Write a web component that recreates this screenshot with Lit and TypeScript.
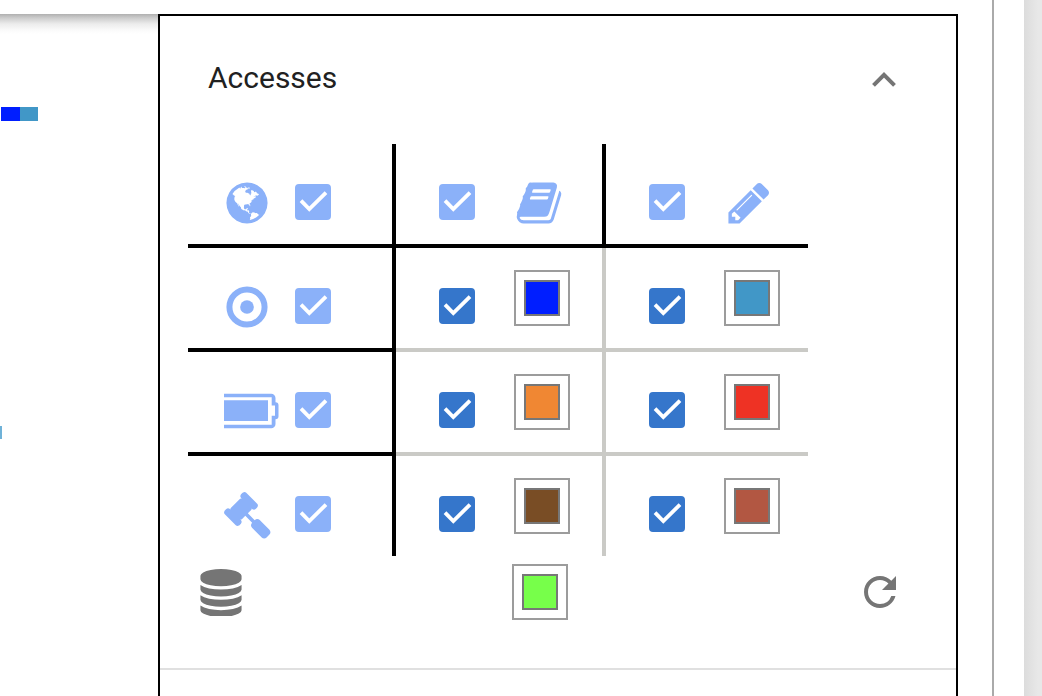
import { LitElement, html, svg, css } from "lit";
import { customElement, property, state } from "lit/decorators.js";

const GLYPHS: Record<string, unknown> = {
  globe: svg`<path d="M896 128q209 0 385.5 103t279.5 279.5 103 385.5-103 385.5-279.5 279.5-385.5 103-385.5-103-279.5-279.5-103-385.5 103-385.5 279.5-279.5 385.5-103zm274 521q-2 1-9.5 9.5t-13.5 9.5q2 0 4.5-5t5-11 3.5-7q6-7 22-15 14-6 52-12 34-8 51 11-2-2 9.5-13t14.5-12q3-2 15-4.5t15-7.5l2-22q-12 1-17.5-7t-6.5-21q0 2-6 8 0-7-4.5-8t-11.5 1-9 1q-10-3-15-7.5t-8-16.5-4-15q-2-5-9.5-11t-9.5-10q-1-2-2.5-5.5t-3-6.5-4-5.5-5.5-2.5-7 5-7.5 10-4.5 5q-3-2-6-1.5t-4.5 1-4.5 3-5 3.5q-3 2-8.5 3t-8.5 2q15-5-1-11-10-4-16-3 9-4 7.5-12t-8.5-14h5q-1-4-8.5-8.5t-17.5-8.5-13-6q-8-5-34-9.5t-33-.5q-5 6-4.5 10.5t4 14 3.5 12.5q1 6-5.5 13t-6.5 12q0 7 14 15.5t10 21.5q-3 8-16 16t-16 12q-5 8-1.5 18.5t10.5 16.5q2 2 1.5 4t-3.5 4.5-5.5 4-6.5 3.5l-3 2q-11 5-20.5-6t-13.5-26q-7-25-16-30-23-8-29 1-5-13-41-26-25-9-58-4 6-1 0-15-7-15-19-12 3-6 4-17.5t1-13.5q3-13 12-23 1-1 7-8.5t9.5-13.5.5-6q35 4 50-11 5-5 11.5-17t10.5-17q9-6 14-5.5t14.5 5.5 14.5 5q14 1 15.5-11t-7.5-20q12 1 3-17-4-7-8-9-12-4-27 5-8 4 2 8-1-1-9.5 10.5t-16.5 17.5-16-5q-1-1-5.5-13.5t-9.5-13.5q-8 0-16 15 3-8-11-15t-24-8q19-12-8-27-7-4-20.5-5t-19.5 4q-5 7-5.5 11.5t5 8 10.5 5.5 11.5 4 8.5 3q14 10 8 14-2 1-8.5 3.5t-11.5 4.5-6 4q-3 4 0 14t-2 14q-5-5-9-17.5t-7-16.5q7 9-25 6l-10-1q-4 0-16 2t-20.5 1-13.5-8q-4-8 0-20 1-4 4-2-4-3-11-9.5t-10-8.5q-46 15-94 41 6 1 12-1 5-2 13-6.5t10-5.5q34-14 42-7l5-5q14 16 20 25-7-4-30-1-20 6-22 12 7 12 5 18-4-3-11.5-10t-14.5-11-15-5q-16 0-22 1-146 80-235 222 7 7 12 8 4 1 5 9t2.5 11 11.5-3q9 8 3 19 1-1 44 27 19 17 21 21 3 11-10 18-1-2-9-9t-9-4q-3 5 .5 18.5t10.5 12.5q-7 0-9.5 16t-2.5 35.5-1 23.5l2 1q-3 12 5.5 34.5t21.5 19.5q-13 3 20 43 6 8 8 9 3 2 12 7.5t15 10 10 10.5q4 5 10 22.5t14 23.5q-2 6 9.5 20t10.5 23q-1 0-2.5 1t-2.5 1q3 7 15.5 14t15.5 13q1 3 2 10t3 11 8 2q2-20-24-62-15-25-17-29-3-5-5.5-15.5t-4.5-14.5q2 0 6 1.5t8.5 3.5 7.5 4 2 3q-3 7 2 17.5t12 18.5 17 19 12 13q6 6 14 19.5t0 13.5q9 0 20 10t17 20q5 8 8 26t5 24q2 7 8.5 13.5t12.5 9.5l16 8 13 7q5 2 18.5 10.5t21.5 11.5q10 4 16 4t14.5-2.5 13.5-3.5q15-2 29 15t21 21q36 19 55 11-2 1 .5 7.5t8 15.5 9 14.5 5.5 8.5q5 6 18 15t18 15q6-4 7-9-3 8 7 20t18 10q14-3 14-32-31 15-49-18 0-1-2.5-5.5t-4-8.5-2.5-8.5 0-7.5 5-3q9 0 10-3.5t-2-12.5-4-13q-1-8-11-20t-12-15q-5 9-16 8t-16-9q0 1-1.5 5.5t-1.5 6.5q-13 0-15-1 1-3 2.5-17.5t3.5-22.5q1-4 5.5-12t7.5-14.5 4-12.5-4.5-9.5-17.5-2.5q-19 1-26 20-1 3-3 10.5t-5 11.5-9 7q-7 3-24 2t-24-5q-13-8-22.5-29t-9.5-37q0-10 2.5-26.5t3-25-5.5-24.5q3-2 9-9.5t10-10.5q2-1 4.5-1.5t4.5 0 4-1.5 3-6q-1-1-4-3-3-3-4-3 7 3 28.5-1.5t27.5 1.5q15 11 22-2 0-1-2.5-9.5t-.5-13.5q5 27 29 9 3 3 15.5 5t17.5 5q3 2 7 5.5t5.5 4.5 5-.5 8.5-6.5q10 14 12 24 11 40 19 44 7 3 11 2t4.5-9.5 0-14-1.5-12.5l-1-8v-18l-1-8q-15-3-18.5-12t1.5-18.5 15-18.5q1-1 8-3.5t15.5-6.5 12.5-8q21-19 15-35 7 0 11-9-1 0-5-3t-7.5-5-4.5-2q9-5 2-16 5-3 7.5-11t7.5-10q9 12 21 2 7-8 1-16 5-7 20.5-10.5t18.5-9.5q7 2 8-2t1-12 3-12q4-5 15-9t13-5l17-11q3-4 0-4 18 2 31-11 10-11-6-20 3-6-3-9.5t-15-5.5q3-1 11.5-.5t10.5-1.5q15-10-7-16-17-5-43 12zm-163 877q206-36 351-189-3-3-12.5-4.5t-12.5-3.5q-18-7-24-8 1-7-2.5-13t-8-9-12.5-8-11-7q-2-2-7-6t-7-5.5-7.5-4.5-8.5-2-10 1l-3 1q-3 1-5.5 2.5t-5.5 3-4 3 0 2.5q-21-17-36-22-5-1-11-5.5t-10.5-7-10-1.5-11.5 7q-5 5-6 15t-2 13q-7-5 0-17.5t2-18.5q-3-6-10.5-4.5t-12 4.5-11.5 8.5-9 6.5-8.5 5.5-8.5 7.5q-3 4-6 12t-5 11q-2-4-11.5-6.5t-9.5-5.5q2 10 4 35t5 38q7 31-12 48-27 25-29 40-4 22 12 26 0 7-8 20.5t-7 21.5q0 6 2 16z"/>`,
  book: svg`<path d="M1703 478q40 57 18 129l-275 906q-19 64-76.5 107.5t-122.5 43.5h-923q-77 0-148.5-53.5t-99.5-131.5q-24-67-2-127 0-4 3-27t4-37q1-8-3-21.5t-3-19.5q2-11 8-21t16.5-23.5 16.5-23.5q23-38 45-91.5t30-91.5q3-10 .5-30t-.5-28q3-11 17-28t17-23q21-36 42-92t25-90q1-9-2.5-32t.5-28q4-13 22-30.5t22-22.5q19-26 42.5-84.5t27.5-96.5q1-8-3-25.5t-2-26.5q2-8 9-18t18-23 17-21q8-12 16.5-30.5t15-35 16-36 19.5-32 26.5-23.5 36-11.5 47.5 5.5l-1 3q38-9 51-9h761q74 0 114 56t18 130l-274 906q-36 119-71.5 153.5t-128.5 34.5h-869q-27 0-38 15-11 16-1 43 24 70 144 70h923q29 0 56-15.5t35-41.5l300-987q7-22 5-57 38 15 59 43zm-1064 2q-4 13 2 22.5t20 9.5h608q13 0 25.5-9.5t16.5-22.5l21-64q4-13-2-22.5t-20-9.5h-608q-13 0-25.5 9.5t-16.5 22.5zm-83 256q-4 13 2 22.5t20 9.5h608q13 0 25.5-9.5t16.5-22.5l21-64q4-13-2-22.5t-20-9.5h-608q-13 0-25.5 9.5t-16.5 22.5z"/>`,
  pencil: svg`<path d="M491 1536l91-91-235-235-91 91v107h128v128h107zm523-928q0-22-22-22-10 0-17 7l-542 542q-7 7-7 17 0 22 22 22 10 0 17-7l542-542q7-7 7-17zm-54-192l416 416-832 832h-416v-416zm683 96q0 53-37 90l-166 166-416-416 166-165q36-38 90-38 53 0 91 38l235 234q37 39 37 91z"/>`,
  target: svg`<circle cx="896" cy="896" r="656" fill="none" stroke="currentColor" stroke-width="224"/><circle cx="896" cy="896" r="256"/>`,
  gavel: svg`<path d="M1771 1536q0 53-37 90l-107 108q-39 37-91 37-53 0-90-37l-363-364q-38-36-38-90 0-53 43-96l-256-256-126 126q-14 14-34 14t-34-14q2 2 12.5 12t12.5 13 10 11.5 10 13.5 6 13.5 5.5 16.5 1.5 18q0 38-28 68-3 3-16.5 18t-19 20.5-18.5 16.5-22 15.5-22 9-26 4.5q-40 0-68-28l-408-408q-28-28-28-68 0-13 4.5-26t9-22 15.5-22 16.5-18.5 20.5-19 18-16.5q30-28 68-28 10 0 18 1.5t16.5 5.5 13.5 6 13.5 10 11.5 10 13 12.5 12 12.5q-14-14-14-34t14-34l348-348q14-14 34-14t34 14q-2-2-12.5-12t-12.5-13-10-11.5-10-13.5-6-13.5-5.5-16.5-1.5-18q0-38 28-68 3-3 16.5-18t19-20.5 18.5-16.5 22-15.5 22-9 26-4.5q40 0 68 28l408 408q28 28 28 68 0 13-4.5 26t-9 22-15.5 22-16.5 18.5-20.5 19-18 16.5q-30 28-68 28-10 0-18-1.5t-16.5-5.5-13.5-6-13.5-10-11.5-10-13-12.5-12-12.5q14 14 14 34t-14 34l-126 126 256 256q43-43 96-43 52 0 91 37l363 363q37 39 37 91z"/>`,
};

interface AccessRow {
  id: string;
  label: string;
  read: string;
  write: string;
}

const ROWS: AccessRow[] = [
  { id: "target", label: "Targeted", read: "#001eff", write: "#4197c7" },
  { id: "battery", label: "Battery", read: "#f08733", write: "#ee3224" },
  { id: "gavel", label: "Rules", read: "#794d25", write: "#b25742" },
];

@customElement("access-check")
export class AccessCheck extends LitElement {
  @property() label = "";
  @property({ type: Boolean, reflect: true }) strong = false;

  static styles = css`
    :host { display: block; flex: none; color: #8bb1f9; }
    :host([strong]) { color: #3576cb; }
    .box { display: grid; width: 36px; height: 36px; cursor: pointer; }
    .input, .mark { grid-area: 1 / 1; width: 36px; height: 36px; margin: 0; }
    .input {
      appearance: none;
      box-sizing: border-box;
      border: 4px solid currentColor;
      border-radius: 4px;
      color: inherit;
      cursor: pointer;
    }
    .input:checked { background: currentColor; }
    .mark { pointer-events: none; visibility: hidden; }
    .input:checked + .mark { visibility: visible; }
  `;

  render() {
    return html`<label class="box">
      <input class="input" type="checkbox" checked aria-label=${this.label} />
      <svg class="mark" viewBox="0 0 36 36" aria-hidden="true">
        <path d="M6 16.6L14.3 25L31 8.6" fill="none" stroke="#fff" stroke-width="3.8" />
      </svg>
    </label>`;
  }
}

@customElement("color-well")
export class ColorWell extends LitElement {
  @property() value = "#000000";
  @property() label = "";

  static styles = css`
    :host { display: block; flex: none; }
    .well { display: block; }
    .input {
      appearance: none;
      display: block;
      box-sizing: border-box;
      width: 56px;
      height: 56px;
      margin: 0;
      padding: 8px;
      border: 2px solid #9c9c9c;
      border-radius: 0;
      background: #fff;
      cursor: pointer;
    }
    .input::-webkit-color-swatch-wrapper { padding: 0; }
    .input::-webkit-color-swatch { border: 2px solid #777; border-radius: 0; }
  `;

  render() {
    return html`<label class="well">
      <input class="input" type="color" .value=${this.value} aria-label=${this.label} />
    </label>`;
  }
}

@customElement("app-root")
export class AppRoot extends LitElement {
  @state() private open = true;

  static styles = css`
    :host {
      display: flex;
      min-height: 100vh;
      background: #fff;
      color: #212121;
      font-family: Roboto, "Liberation Sans", sans-serif;
    }
    .main {
      display: flex;
      flex-direction: column;
      flex: 1;
      min-width: 0;
      border-right: 2px solid #aaa;
    }
    .topbar { height: 14px; background: #fff; }
    .content { display: flex; flex: 1; padding-right: 34px; }
    .chart {
      flex: 1;
      min-width: 0;
      background: linear-gradient(#b0b0b0, #cdcdcd 4px, #ececec 10px, #fafafa 16px, #fff 20px) top / 100% 20px no-repeat;
    }
    .bars { display: block; }
    .panel {
      flex: 0 1 800px;
      box-sizing: border-box;
      border: 2px solid #000;
      border-bottom: 0;
      background: #fff;
    }
    .gutter { width: 30px; }
    .rail { width: 18px; background: linear-gradient(90deg, #dcdcdc, #e8e8e8 14px); }
    .heading { margin: 0; }
    .toggle {
      display: flex;
      align-items: center;
      justify-content: space-between;
      box-sizing: border-box;
      width: 100%;
      height: 124px;
      padding: 0 60px 0 48px;
      border: 0;
      background: none;
      color: inherit;
      font: 400 30px/36px Roboto, "Liberation Sans", sans-serif;
      cursor: pointer;
    }
    .chevron { color: #757575; }
    .section { padding-bottom: 48px; border-bottom: 2px solid #e0e0e0; }
    .matrix {
      table-layout: fixed;
      width: 620px;
      margin: 4px 0 0 28px;
      border-collapse: collapse;
    }
    .col-scope { width: 206px; }
    .col-read { width: 210px; }
    .cell { padding: 0; font-weight: 400; text-align: left; }
    .scope, .head { border-right: 4px solid #000; }
    .line .head, .line .scope { border-bottom: 4px solid #000; }
    .value { border: 4px solid #cacac6; }
    .last { border-right: 0; }
    .body:last-child .cell { border-bottom: 0; }
    .inner {
      display: flex;
      gap: 39px;
      box-sizing: border-box;
      height: 100px;
      padding: 40px 0 0 43px;
    }
    .scope .inner { gap: 16px; padding-left: 35px; }
    .raised { height: 56px; margin-top: -18px; }
    .glyph {
      display: flex;
      justify-content: center;
      width: 50px;
      height: 48px;
      margin-top: -5px;
      color: #8bb1f9;
      fill: currentColor;
    }
    .scope .glyph { justify-content: flex-start; width: 56px; }
    .footer {
      display: grid;
      grid-template-columns: 1fr auto 1fr;
      align-items: center;
      margin-top: 8px;
      padding: 0 52px 0 16px;
    }
    .action {
      display: block;
      width: 48px;
      height: 48px;
      padding: 0;
      border: 0;
      background: none;
      color: #757575;
      fill: currentColor;
      cursor: pointer;
    }
    .action svg { display: block; }
    .database { margin-left: 21px; }
    .refresh { justify-self: end; }
  `;

  private glyph(name: string) {
    if (name === "battery") {
      return html`<span class="glyph"><svg width="56" height="48" viewBox="-1 5 56 48" aria-hidden="true">
        <path d="M0 18.3H44V39H0z" />
        <path fill-rule="evenodd" d="M0 11.7H47.2a4.3 4.3 0 0 1 4.3 4.3V20.3a3 3 0 0 1 3 3V34.3a3 3 0 0 1-3 3V42a4.3 4.3 0 0 1-4.3 4.3H0V42.7H47.7V33.8H51V23.6H47.7V15.2H0z" />
      </svg></span>`;
    }
    return html`<span class="glyph"><svg width="48" height="48" viewBox="0 0 1792 1792" aria-hidden="true">${GLYPHS[name]}</svg></span>`;
  }

  private valueCell(row: AccessRow, kind: "read" | "write") {
    return html`<td class="cell value ${kind === "write" ? "last" : ""}">
      <div class="inner">
        <access-check strong label="${row.label} ${kind}"></access-check>
        <color-well class="raised" label="${row.label} ${kind} color" value=${row[kind]}></color-well>
      </div>
    </td>`;
  }

  private renderMatrix() {
    return html`<table class="matrix">
      <colgroup><col class="col-scope" /><col class="col-read" /><col /></colgroup>
      <tbody>
        <tr class="line">
          <th class="cell scope" scope="col"><div class="inner">${this.glyph("globe")}<access-check label="All accesses"></access-check></div></th>
          <th class="cell head" scope="col"><div class="inner"><access-check label="All reads"></access-check>${this.glyph("book")}</div></th>
          <th class="cell head last" scope="col"><div class="inner"><access-check label="All writes"></access-check>${this.glyph("pencil")}</div></th>
        </tr>
        ${ROWS.map((row) => html`<tr class="line body">
          <th class="cell scope" scope="row"><div class="inner">${this.glyph(row.id)}<access-check label=${row.label}></access-check></div></th>
          ${this.valueCell(row, "read")}${this.valueCell(row, "write")}
        </tr>`)}
      </tbody>
    </table>
    <div class="footer">
      <button class="action database" aria-label="Storage">
        <svg width="48" height="48" viewBox="0 -37 1792 1792" aria-hidden="true"><path d="M896 768q237 0 443-43t325-127v170q0 69-103 128t-280 93.5-385 34.5-385-34.5-280-93.5-103-128v-170q119 84 325 127t443 43zm0 768q237 0 443-43t325-127v170q0 69-103 128t-280 93.5-385 34.5-385-34.5-280-93.5-103-128v-170q119 84 325 127t443 43zm0-384q237 0 443-43t325-127v170q0 69-103 128t-280 93.5-385 34.5-385-34.5-280-93.5-103-128v-170q119 84 325 127t443 43zm0-1152q208 0 385 34.5t280 93.5 103 128v128q0 69-103 128t-280 93.5-385 34.5-385-34.5-280-93.5-103-128v-128q0-69 103-128t280-93.5 385-34.5z"/></svg>
      </button>
      <color-well label="Storage color" value="#77ff4a"></color-well>
      <button class="action refresh" aria-label="Reset colors">
        <svg width="48" height="48" viewBox="0 0 24 24" aria-hidden="true"><path d="M17.65 6.35A7.958 7.958 0 0 0 12 4c-4.42 0-7.99 3.58-7.99 8s3.57 8 7.99 8c3.73 0 6.84-2.55 7.73-6h-2.08A5.99 5.99 0 0 1 12 18c-3.31 0-6-2.69-6-6s2.69-6 6-6c1.66 0 3.14.69 4.22 1.78L13 11h7V4l-2.35 2.35z"/></svg>
      </button>
    </div>`;
  }

  render() {
    return html`
      <main class="main">
        <div class="topbar"></div>
        <div class="content">
          <div class="chart">
            <svg class="bars" width="100%" height="500" role="img" aria-label="Access timeline">
              <rect x="1" y="93" width="19" height="14" fill="#001eff" />
              <rect x="20" y="93" width="18" height="14" fill="#4197c7" />
              <rect x="0" y="412" width="2" height="13" fill="#6fb2d8" />
            </svg>
          </div>
          <section class="panel">
            <div class="section">
              <h2 class="heading">
                <button class="toggle" aria-expanded=${this.open} @click=${() => (this.open = !this.open)}>
                  <span>Accesses</span>
                  <svg class="chevron" width="24" height="18" viewBox="0 -2 24 18" aria-hidden="true">
                    <path d="M1.5 14.3L12 3.8L22.5 14.3" fill="none" stroke="currentColor" stroke-width="4" />
                  </svg>
                </button>
              </h2>
              ${this.open ? this.renderMatrix() : null}
            </div>
          </section>
        </div>
      </main>
      <div class="gutter"></div>
      <div class="rail"></div>
    `;
  }
}
